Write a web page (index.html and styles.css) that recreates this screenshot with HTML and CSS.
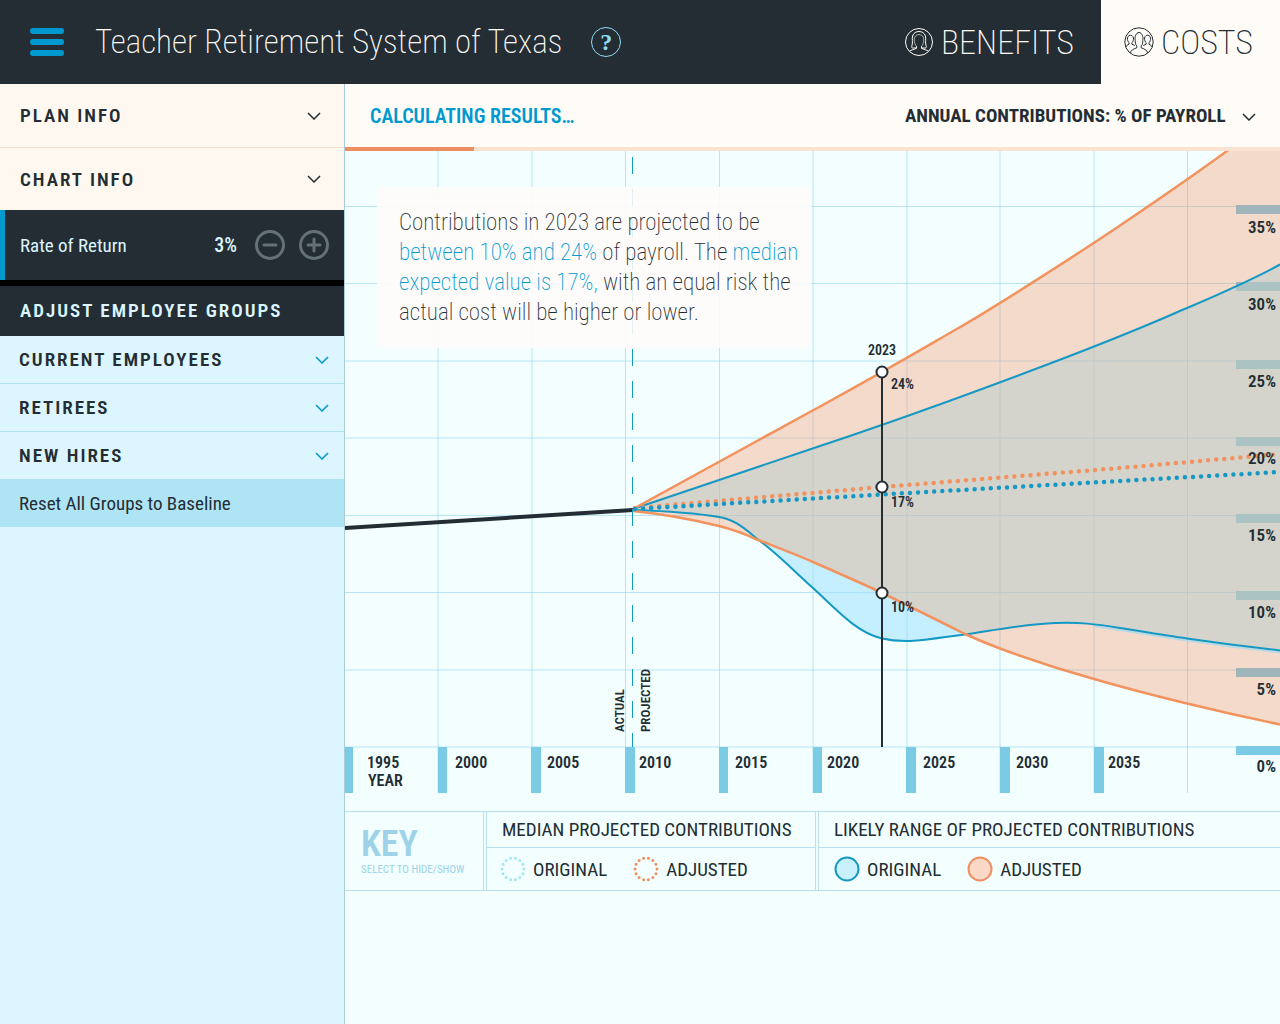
FILE: index.html
```html
<!DOCTYPE html>
<html lang="en">
<head>
<meta charset="utf-8">
<meta name="viewport" content="width=device-width, initial-scale=1">
<title>Teacher Retirement System of Texas</title>
<link rel="stylesheet" href="styles.css">
</head>
<body>
<header class="topbar">
  <button class="menu" type="button" aria-label="Menu">
    <svg width="34" height="28" viewBox="0 0 34 28" aria-hidden="true">
      <rect y="0" width="34" height="6" rx="3"/><rect y="11" width="34" height="6" rx="3"/><rect y="22" width="34" height="6" rx="3"/>
    </svg>
  </button>
  <h1 class="title">Teacher Retirement System of Texas</h1>
  <button class="help" type="button" aria-label="Help">?</button>
  <nav class="tabs">
    <a class="tab" href="#benefits">
      <svg class="tab-icon" width="30" height="30" viewBox="0 0 30 30" aria-hidden="true">
        <circle cx="15" cy="15" r="13.500"/>
        <path d="M5.500 24.200 C7 22.800 10 22.800 12.500 21.200 V19.300 M24.500 24.200 C23 22.800 20 22.800 17.500 21.200 V19.300 M12.500 21 H8.500 C7.300 20.800 7.600 19.600 8 18.500 C9 15 7.800 12 8.600 9 C9.500 6 12 4.500 15 4.500 C18 4.500 20.500 6 21.400 9 C22.200 12 21 15 22 18.500 C22.400 19.600 22.700 20.800 21.500 21 H17.500"/>
        <path stroke-opacity=".6" d="M12.500 19.500 C10.800 17.500 10.300 15 10.300 12.500 C10.300 9.500 12.300 7.500 15 7.500 C17.700 7.500 19.700 9.500 19.700 12.500 C19.700 15 19.200 17.500 17.500 19.500"/>
      </svg>
      BENEFITS
    </a>
    <a class="tab tab-active" href="#costs" aria-current="page">
      <svg class="tab-icon" width="30" height="30" viewBox="0 0 30 30" aria-hidden="true">
        <circle cx="15" cy="15" r="14.200"/>
        <path d="M6.500 26 C6.800 23.500 9 22 12.800 20.800 V18.800 C11 17 11.500 15.500 11.200 13.500 C10.500 10 12 5.500 15 5.500 C18 5.500 19.500 10 18.800 13.500 C18.500 15.500 19 17 17.200 18.800 V20.800 C21 22 23.200 23.500 23.500 26"/>
        <path d="M2 20 C2.500 18.500 3.500 18 5 17.200 V15.600 C3.700 14.800 3.800 13.500 3.500 12.500 C3 10.500 4.300 8.200 6.500 8.200 C8.700 8.200 9.900 10.500 9.400 12.500 C9.100 13.500 9.200 14.800 7.900 15.600 V17.200 L10.800 18.500"/>
        <path d="M28 20 C27.500 18.500 26.500 18 25 17.200 V15.600 C26.300 14.800 26.200 13.500 26.500 12.500 C27 10.500 25.700 8.200 23.500 8.200 C21.300 8.200 20.100 10.500 20.600 12.500 C20.900 13.500 20.800 14.800 22.100 15.600 V17.200 L19.200 18.500"/>
      </svg>
      COSTS
    </a>
  </nav>
</header>

<div class="layout">
  <aside class="sidebar">
    <button class="row row-info" type="button" aria-expanded="false">PLAN INFO
      <svg class="chevron" width="14" height="8" viewBox="0 0 14 8" aria-hidden="true"><path d="M1 1 L7 7 L13 1"/></svg>
    </button>
    <button class="row row-info" type="button" aria-expanded="false">CHART INFO
      <svg class="chevron" width="14" height="8" viewBox="0 0 14 8" aria-hidden="true"><path d="M1 1 L7 7 L13 1"/></svg>
    </button>
    <div class="rate">
      <span class="rate-name" id="rate-name">Rate of Return</span>
      <output class="rate-value" aria-labelledby="rate-name">3%</output>
      <button class="step" type="button" aria-label="Decrease rate of return">
        <svg width="30" height="30" viewBox="0 0 30 30" aria-hidden="true"><circle cx="15" cy="15" r="13.500"/><path d="M9 15 H21"/></svg>
      </button>
      <button class="step" type="button" aria-label="Increase rate of return">
        <svg width="30" height="30" viewBox="0 0 30 30" aria-hidden="true"><circle cx="15" cy="15" r="13.500"/><path d="M9 15 H21 M15 9 V21"/></svg>
      </button>
    </div>
    <h2 class="groups-title">ADJUST EMPLOYEE GROUPS</h2>
    <button class="row row-group" type="button" aria-expanded="false">CURRENT EMPLOYEES
      <svg class="chevron" width="14" height="8" viewBox="0 0 14 8" aria-hidden="true"><path d="M1 1 L7 7 L13 1"/></svg>
    </button>
    <button class="row row-group" type="button" aria-expanded="false">RETIREES
      <svg class="chevron" width="14" height="8" viewBox="0 0 14 8" aria-hidden="true"><path d="M1 1 L7 7 L13 1"/></svg>
    </button>
    <button class="row row-group" type="button" aria-expanded="false">NEW HIRES
      <svg class="chevron" width="14" height="8" viewBox="0 0 14 8" aria-hidden="true"><path d="M1 1 L7 7 L13 1"/></svg>
    </button>
    <button class="reset" type="button">Reset All Groups to Baseline</button>
  </aside>

  <main class="main">
    <div class="toolbar">
      <p class="status" id="status">CALCULATING RESULTS…</p>
      <div class="picker">
        <select class="picker-select" aria-label="Chart measure">
          <option>ANNUAL CONTRIBUTIONS: % OF PAYROLL</option>
        </select>
        <svg class="chevron picker-chevron" width="14" height="8" viewBox="0 0 14 8" aria-hidden="true"><path d="M1 1 L7 7 L13 1"/></svg>
      </div>
    </div>
    <progress class="progress" value="138" max="1000" aria-labelledby="status"></progress>

    <div class="chart">
      <svg class="plot" viewBox="0 0 935 660" role="img" aria-label="Annual contributions as a percentage of payroll, 1995 to 2040">
        <defs>
          <path id="range-original" d="M288 358 C350 337 412 316 475 295 S622 244 705 212.500 S800 175 842 157 S915 124.500 935 113.500 V499.500 C904 496 873 492 842 487.500 C820 484.500 797 480.500 775 477 C750 473 735 471 710 472 C680 473 650 479 620 483.500 C595 486 565 494 537 487.500 C512 482 492 459 468 437 C450 421 434 404 415 390 C402 380 392 369 374 366 C350 362 318 360 288 359 Z"/>
          <path id="range-adjusted" d="M288 358 C350 324 412 290 475 255.500 S565 205 610 179 S735 101.500 775 74.500 S860 16 882 0 H935 V573.500 C904 567 873 560 842 552.500 C811 545 780 537 749 528 C717 519 686 509 655 497.500 C643 493 632 488.500 620 483 C592 469 560 453 537 442 C514 431 491 421 468 411 C450 403 431 396 412 388.500 C398 382 386 378 374 375 C345 368 318 363 288 360 Z"/>
          <clipPath id="in-adjusted"><use href="#range-adjusted"/></clipPath>
        </defs>
        <g class="grid">
          <path d="M0 55.500 H935 M0 132.500 H935 M0 210 H935 M0 287 H935 M0 364.500 H935 M0 441.500 H935 M0 519 H935 M0 596 H935"/>
          <path d="M93 0 V642 M187 0 V642 M280.500 0 V642 M374.500 0 V642 M468 0 V642 M562 0 V642 M655 0 V642 M749 0 V642 M842.500 0 V642"/>
        </g>
        <g class="tick">
          <path d="M0 596 h8 v46 h-8z M93 596 h9 v46 h-9z M186 596 h10 v46 h-10z M280 596 h10 v46 h-10z M374 596 h9 v46 h-9z M468 596 h9 v46 h-9z M561 596 h10 v46 h-10z M655 596 h10 v46 h-10z M749 596 h10 v46 h-10z"/>
          <path d="M891 54 h44 v9 h-44z M891 131 h44 v9 h-44z M891 209 h44 v9 h-44z M891 286 h44 v9 h-44z M891 363 h44 v9 h-44z M891 440 h44 v9 h-44z M891 517 h44 v9 h-44z M891 595 h44 v9 h-44z"/>
        </g>
        <use class="area-original" href="#range-original"/>
        <use class="area-adjusted" href="#range-adjusted"/>
        <use class="area-overlap" href="#range-original" clip-path="url(#in-adjusted)"/>
        <path class="line-halo" d="M749 475 L775 479 C797 482.500 820 486.500 842 489.500 C873 494 904 498 935 501.500"/>
        <path class="line-original" d="M288 358 C350 337 412 316 475 295 S622 244 705 212.500 S800 175 842 157 S915 124.500 935 113.500"/>
        <path class="line-original" d="M288 359 C318 360 350 362 374 366 C392 369 402 380 415 390 C434 404 450 421 468 437 C492 459 512 482 537 487.500 C565 494 595 486 620 483.500 C650 479 680 473 710 472 C735 471 750 473 775 477 C797 480.500 820 484.500 842 487.500 C873 492 904 496 935 499.500"/>
        <path class="line-adjusted" d="M288 358 C350 324 412 290 475 255.500 S565 205 610 179 S735 101.500 775 74.500 S860 16 882 0 L890 -6"/>
        <path class="line-adjusted" d="M288 360 C318 363 345 368 374 375 C386 378 398 382 412 388.500 C431 396 450 403 468 411 C491 421 514 431 537 442 C560 453 592 469 620 483 C632 488.500 643 493 655 497.500 C686 509 717 519 749 528 C780 537 811 545 842 552.500 C873 560 904 567 935 573.500"/>
        <path class="line-actual" d="M0 377 L288 359"/>
        <path class="median-adjusted" d="M290 357 L537 336 L775 317 L935 303"/>
        <path class="median-original" d="M290 358 L537 343.500 L775 330 L935 321"/>
        <path class="divider" d="M287.500 6 V596"/>
        <g class="marker">
          <path d="M537 221 V596"/>
          <circle cx="537" cy="221" r="5.500"/><circle cx="537" cy="336" r="5.500"/><circle cx="537" cy="442" r="5.500"/>
        </g>
        <g class="label label-point">
          <text x="537" y="204" text-anchor="middle">2023</text>
          <text x="546" y="238">24%</text><text x="546" y="356">17%</text><text x="546" y="461">10%</text>
        </g>
        <g class="label label-side">
          <text transform="translate(279 581) rotate(-90)">ACTUAL</text>
          <text transform="translate(305 581) rotate(-90)">PROJECTED</text>
        </g>
        <g class="label">
          <text x="22" y="617">1995</text><text x="23" y="635">YEAR</text>
          <text x="110" y="617">2000</text><text x="202" y="617">2005</text><text x="294" y="617">2010</text><text x="390" y="617">2015</text>
          <text x="482" y="617">2020</text><text x="578" y="617">2025</text><text x="671" y="617">2030</text><text x="763" y="617">2035</text>
        </g>
        <g class="label label-percent" text-anchor="end">
          <text x="931" y="82">35%</text><text x="931" y="159">30%</text><text x="931" y="236">25%</text><text x="931" y="313">20%</text>
          <text x="931" y="390">15%</text><text x="931" y="467">10%</text><text x="931" y="544">5%</text><text x="931" y="621">0%</text>
        </g>
      </svg>
      <p class="callout">Contributions in 2023 are projected to be <br><em>between 10% and 24%</em> of payroll. The <em>median <br>expected value is 17%,</em> with an equal risk the <br>actual cost will be higher or lower.</p>
    </div>

    <section class="key" aria-label="Key">
      <div class="key-intro">
        <h2 class="key-title">KEY</h2>
        <p class="key-hint">SELECT TO HIDE/SHOW</p>
      </div>
      <fieldset class="key-group">
        <legend class="key-heading">MEDIAN PROJECTED CONTRIBUTIONS</legend>
        <div class="key-items">
          <label class="key-item">
            <span class="swatch"><input type="checkbox" checked><svg class="ring ring-light" width="26" height="26" viewBox="0 0 26 26" aria-hidden="true"><circle cx="13" cy="13" r="11" pathLength="140"/></svg></span>ORIGINAL
          </label>
          <label class="key-item">
            <span class="swatch"><input type="checkbox" checked><svg class="ring ring-orange" width="26" height="26" viewBox="0 0 26 26" aria-hidden="true"><circle cx="13" cy="13" r="11" pathLength="140"/></svg></span>ADJUSTED
          </label>
        </div>
      </fieldset>
      <fieldset class="key-group key-group-wide">
        <legend class="key-heading">LIKELY RANGE OF PROJECTED CONTRIBUTIONS</legend>
        <div class="key-items">
          <label class="key-item">
            <span class="swatch"><input type="checkbox" checked><svg class="disc disc-blue" width="26" height="26" viewBox="0 0 26 26" aria-hidden="true"><circle cx="13" cy="13" r="11.500"/></svg></span>ORIGINAL
          </label>
          <label class="key-item">
            <span class="swatch"><input type="checkbox" checked><svg class="disc disc-orange" width="26" height="26" viewBox="0 0 26 26" aria-hidden="true"><circle cx="13" cy="13" r="11.500"/></svg></span>ADJUSTED
          </label>
        </div>
      </fieldset>
    </section>
  </main>
</div>
</body>
</html>
```
FILE: styles.css
```css
:root {
  --ink: #232d33;
  --dark: #242d33;
  --cream: #fffcf8;
  --blue: #0099cf;
  --line: #b9dff0;
  --orange: #ee8f62;
  --ice: #f2fffe;
}

* { box-sizing: border-box; }

body {
  margin: 0;
  min-height: 100vh;
  display: flex;
  flex-direction: column;
  background: var(--ice);
  color: var(--ink);
  font-family: "Roboto Condensed", "Arial Narrow", sans-serif;
  font-size: 19px;
}

h1, h2, p { margin: 0; font-weight: 400; }

button {
  margin: 0;
  padding: 0;
  border: 0;
  background: none;
  color: inherit;
  font: inherit;
  cursor: pointer;
}

svg { display: block; flex: none; }

/* Header */
.topbar {
  display: flex;
  align-items: center;
  height: 84px;
  padding-left: 30px;
  background: var(--dark);
  color: var(--cream);
}
.menu { fill: var(--blue); }
.title {
  margin-left: 31px;
  font-size: 33px;
  font-weight: 250;
  line-height: 40px;
  white-space: nowrap;
}
.help {
  width: 30px;
  height: 30px;
  margin-left: 29px;
  border: 1px solid #8fdcf7;
  border-radius: 50%;
  color: #8fdcf7;
  font: bold 24px/28px "Liberation Serif", serif;
}
.tabs {
  display: flex;
  align-self: stretch;
  margin-left: auto;
}
.tab {
  display: flex;
  align-items: center;
  gap: 7px;
  padding: 0 27px 0 23px;
  color: inherit;
  font-size: 34px;
  font-weight: 250;
  text-decoration: none;
}
.tab-active { background: var(--cream); color: var(--ink); }
.tab-icon { fill: none; stroke: currentColor; stroke-width: 1; }

/* Columns */
.layout {
  flex: 1;
  display: grid;
  grid-template-columns: 345px minmax(0, 1fr);
}
.sidebar {
  border-right: 1px solid #a9cdd9;
  background: #dcf5ff;
}
.chevron { fill: none; stroke: currentColor; stroke-width: 1.500; }

.row {
  display: flex;
  align-items: center;
  justify-content: space-between;
  width: 100%;
  font-weight: 600;
  letter-spacing: 2px;
}
.row-info {
  height: 63px;
  padding: 0 23px 0 20px;
  background: #fff8f1;
}
.row-info + .row-info { border-top: 1px solid #f3dccb; }
.row-group {
  height: 48px;
  padding: 0 15px 0 19px;
  border-bottom: 1px solid #aee1f1;
}
.row-group .chevron { color: var(--blue); }

.rate {
  display: flex;
  align-items: center;
  height: 70px;
  padding: 0 15px;
  border-left: 5px solid var(--blue);
  background: var(--dark);
  color: #dcf5ff;
}
.rate-name { flex: 1; }
.rate-value { margin-right: 4px; font-size: 20px; font-weight: 500; }
.step { margin-left: 14px; fill: none; stroke: #647177; stroke-width: 3; stroke-linecap: round; }

.groups-title {
  border-top: 6px solid #000;
  padding-left: 20px;
  background: var(--dark);
  color: #dcf5ff;
  font-size: 19px;
  font-weight: 600;
  line-height: 50px;
  letter-spacing: 2px;
}
.reset {
  width: 100%;
  height: 47px;
  padding-left: 19px;
  background: #aee4f3;
  text-align: left;
}

/* Toolbar */
.toolbar {
  display: flex;
  align-items: center;
  justify-content: space-between;
  height: 63px;
  padding-left: 25px;
  background: var(--cream);
}
.status { color: var(--blue); font-size: 20px; font-weight: 600; }
.picker { position: relative; }
.picker-select {
  padding: 4px 54px 4px 0;
  border: 0;
  background: none;
  appearance: none;
  color: inherit;
  font: inherit;
  font-weight: 700;
}
.picker-chevron {
  position: absolute;
  top: 50%;
  right: 24px;
  margin-top: -3px;
  pointer-events: none;
}
.progress {
  display: block;
  width: 100%;
  height: 4px;
  border: 0;
  background: #fae3d3;
  appearance: none;
}
.progress::-webkit-progress-bar { background: #fae3d3; }
.progress::-webkit-progress-value { background: var(--orange); }

/* Chart */
.chart { position: relative; }
.plot { width: 100%; height: auto; overflow: hidden; }
.grid { fill: none; stroke: #9ad5ef; stroke-opacity: .65; stroke-width: 1; }
.tick { fill: #7bcbe5; }
.area-original { fill: #94ddff; fill-opacity: .48; }
.area-adjusted { fill: #f97f4f; fill-opacity: .29; }
.area-overlap { fill: #d3ffd8; fill-opacity: .12; }
.line-original { fill: none; stroke: #1598c4; stroke-width: 2; }
.line-adjusted { fill: none; stroke: #f2935f; stroke-width: 2.500; }
.line-halo { fill: none; stroke: #b5dbe6; stroke-width: 2; }
.line-actual { fill: none; stroke: var(--ink); stroke-width: 4; }
.median-original,
.median-adjusted {
  fill: none;
  stroke-width: 4.500;
  stroke-linecap: round;
  stroke-dasharray: 0 8.100;
}
.median-original { stroke: #1598c4; }
.median-adjusted { stroke: #f2935f; }
.divider { stroke: #1598b8; stroke-width: 1; stroke-dasharray: 17 15; }
.marker { fill: #fff; stroke: var(--ink); stroke-width: 2; }
.label { fill: var(--ink); font-size: 16px; font-weight: 600; }
.label-percent { font-size: 17px; }
.label-point { font-size: 14px; }
.label-side { font-size: 13px; }

.callout {
  position: absolute;
  top: 36px;
  left: 32px;
  padding: 21px 13px 20px 22px;
  border-radius: 6px;
  background: rgb(255 252 250 / 88%);
  font-size: 23px;
  font-weight: 250;
  line-height: 30px;
  white-space: nowrap;
}
.callout em { color: var(--blue); font-style: normal; }

/* Key */
.key {
  display: flex;
  gap: 2px;
  border-top: 1px solid var(--line);
  border-bottom: 1px solid var(--line);
}
.key-intro {
  width: 139px;
  padding: 13px 0 0 16px;
  border-right: 1px solid var(--line);
  color: #9dd2e8;
}
.key-title { font-size: 36px; font-weight: 600; line-height: 38px; }
.key-hint { font-size: 11px; line-height: 13px; white-space: nowrap; }
.key-group {
  width: 330px;
  margin: 0;
  padding: 0;
  border: 0;
  border-left: 1px solid var(--line);
  border-right: 1px solid var(--line);
}
.key-group-wide { flex: 1; border-right: 0; }
.key-heading {
  float: left;
  width: 100%;
  padding: 0 15px;
  border-bottom: 1px solid var(--line);
  line-height: 35px;
  white-space: nowrap;
}
.key-items {
  clear: both;
  display: flex;
  gap: 26px;
  height: 42px;
  padding-left: 13px;
}
.key-group-wide .key-items { padding-left: 15px; }
.key-item { display: flex; align-items: center; gap: 7px; }
.swatch { display: grid; }
.swatch > * { grid-area: 1 / 1; }
.swatch input { width: 26px; height: 26px; margin: 0; opacity: 0; }
.ring { fill: none; stroke-width: 3; stroke-linecap: round; stroke-dasharray: 0 10; }
.ring-light { stroke: #a5e3f7; }
.ring-orange { stroke: var(--orange); }
.disc { stroke-width: 2; }
.disc-blue { fill: #c9f0fd; stroke: #1598c4; }
.disc-orange { fill: #fbd8c6; stroke: var(--orange); }
```
